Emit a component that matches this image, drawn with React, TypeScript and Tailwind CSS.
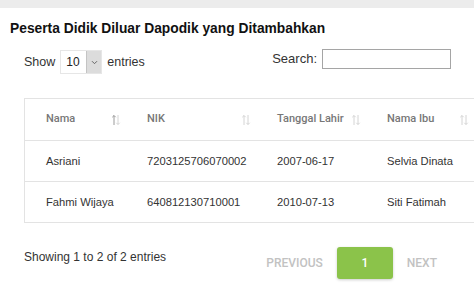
import React from "react";

const rows = [
    { nama: "Asriani", nik: "7203125706070002", lahir: "2007-06-17", ibu: "Selvia Dinata" },
    { nama: "Fahmi Wijaya", nik: "640812130710001", lahir: "2010-07-13", ibu: "Siti Fatimah" },
];

const headers = ["Nama", "NIK", "Tanggal Lahir", "Nama Ibu"];

const SortIcon = ({ active }: { active?: boolean }) => (
    <svg width="10" height="12" viewBox="0 0 10 12" className="shrink-0">
        <path d="M3 11V1.5M1.3 3.2L3 1.5L4.7 3.2" stroke={active ? "#9a9a9a" : "#d4d4d4"} strokeWidth="1" fill="none" />
        <path d="M7 1v9.5M5.3 8.8L7 10.5L8.7 8.8" stroke="#d4d4d4" strokeWidth="1" fill="none" />
    </svg>
);

const cols = "grid grid-cols-[101px_130px_110px_1fr]";

export default function App() {
    return (
        <div className="w-[474px] h-[290px] overflow-hidden bg-white font-['Liberation_Sans',Arial,sans-serif]">
            <div className="h-[8px] bg-[#ececec]" />

            <h3 className="pl-[10px] pt-[12px] text-[13.8px] font-bold text-[#111] leading-[17px]">
                Peserta Didik Diluar Dapodik yang Ditambahkan
            </h3>

            <div className="flex justify-between pl-[24px] pr-[23px] mt-[12px]">
                <div className="flex items-center gap-[4px] text-[12.5px] text-[#333] mt-[1px]">
                    <span>Show</span>
                    <div className="flex h-[24px] w-[42px] border border-[#e6e6e6] ml-[1px]">
                        <span className="flex-1 pl-[5px] text-[12px] leading-[22px] text-[#222]">10</span>
                        <span className="w-[15px] bg-[#dcdcdc] border-l border-[#c4c4c4] flex items-center justify-center">
                            <svg width="7" height="5" viewBox="0 0 7 5">
                                <path d="M1 1.2L3.5 3.7L6 1.2" stroke="#666" strokeWidth="1" fill="none" />
                            </svg>
                        </span>
                    </div>
                    <span className="ml-[1px]">entries</span>
                </div>
                <div className="flex items-start gap-[5px] text-[13px] text-[#333]">
                    <span className="leading-[20px]">Search:</span>
                    <div className="w-[129px] h-[20px] border border-[#a5a5a5]" />
                </div>
            </div>

            <div className="ml-[24px] mt-[24px] w-[451px] border border-[#e3e3e3]">
                <div className={`${cols} h-[41px] items-center text-[11px] text-[#777] font-medium font-['Roboto',sans-serif]`}>
                    {headers.map((h, i) => (
                        <div key={h} className="flex items-center justify-between pl-[21px] pr-[5px]">
                            <span>{h}</span>
                            <SortIcon active={i === 0} />
                        </div>
                    ))}
                </div>
                {rows.map((r) => (
                    <div key={r.nik} className={`${cols} h-[41px] items-center border-t border-[#e3e3e3] text-[11.2px] text-[#333]`}>
                        <div className="pl-[21px]">{r.nama}</div>
                        <div className="pl-[21px]">{r.nik}</div>
                        <div className="pl-[21px]">{r.lahir}</div>
                        <div className="pl-[21px]">{r.ibu}</div>
                    </div>
                ))}
            </div>

            <div className="flex items-start justify-between pl-[24px] pr-[37px] mt-[24px]">
                <span className="text-[12px] text-[#333] leading-[16px] mt-[2px]">Showing 1 to 2 of 2 entries</span>
                <div className="flex items-center gap-[14px] font-['Roboto',sans-serif] text-[12px] font-medium text-[#c2c2c2]">
                    <span>PREVIOUS</span>
                    <span className="w-[56px] h-[32px] rounded-[3px] bg-[#8bc34a] text-white flex items-center justify-center shadow-[0_1px_3px_rgba(0,0,0,0.2)]">
                        1
                    </span>
                    <span>NEXT</span>
                </div>
            </div>
        </div>
    );
}
